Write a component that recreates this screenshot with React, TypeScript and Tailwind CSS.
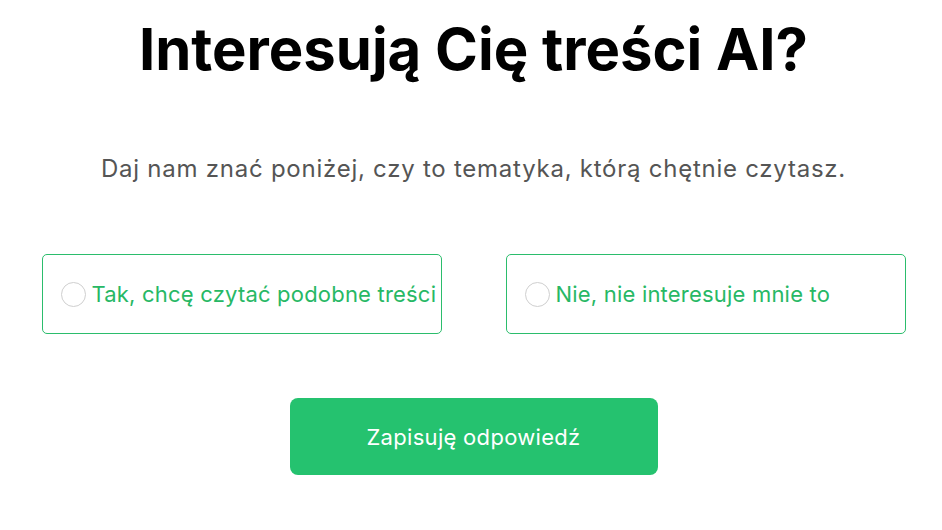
import { useState } from "react";

const options = [
  { id: "yes", label: "Tak, chcę czytać podobne treści" },
  { id: "no", label: "Nie, nie interesuje mnie to" },
];

export default function App() {
  const [choice, setChoice] = useState<string | null>(null);

  return (
    <div className="min-h-[530px] bg-white font-['Inter','Noto_Sans',sans-serif] flex flex-col items-center pl-[5px]">
      <h1 className="mt-[16px] text-[58px] leading-[66px] font-bold text-black">
        Interesuj&#261; Ci&#281; tre&#347;ci AI?
      </h1>

      <p className="mt-[72px] text-[24px] leading-[30px] tracking-[0.75px] text-[#555555]">
        Daj nam zna&#263; poni&#380;ej, czy to tematyka, kt&#243;r&#261; ch&#281;tnie czytasz.
      </p>

      <div className="mt-[70px] flex gap-[64px]">
        {options.map((opt) => (
          <button
            key={opt.id}
            onClick={() => setChoice(opt.id)}
            className="w-[400px] h-[80px] flex items-center gap-[6px] pl-[18px] border border-[#2bbd6c] rounded-[5px] bg-white text-left"
          >
            <span
              className={`w-[25px] h-[25px] rounded-full border shrink-0 ${
                choice === opt.id ? "border-[6px] border-[#22c06a]" : "border-[#cfcfcf]"
              }`}
            />
            <span className="text-[22px] leading-[28px] tracking-[0.2px] text-[#27b865] whitespace-nowrap">
              {opt.label}
            </span>
          </button>
        ))}
      </div>

      <button className="mt-[64px] w-[368px] h-[77px] rounded-[8px] bg-[#25c26f] text-white text-[22px] leading-[28px] tracking-[0.3px]">
        Zapisuj&#281; odpowied&#378;
      </button>
    </div>
  );
}
